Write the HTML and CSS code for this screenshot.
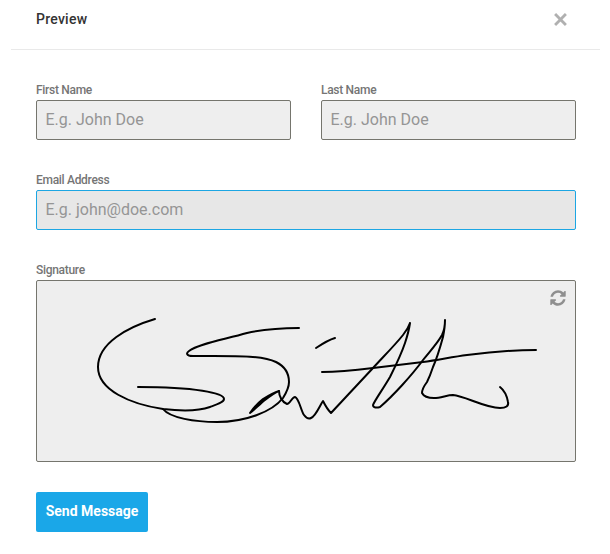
FILE: index.html
```html
<!DOCTYPE html>
<html lang="en">
<head>
<meta charset="utf-8">
<title>Preview</title>
<link rel="stylesheet" href="styles.css">
</head>
<body>
<div class="modal">
  <header class="modal-header">
    <h2 class="modal-title">Preview</h2>
    <svg class="close-icon" viewBox="0 0 12 12" aria-label="Close"><path d="M1 1 11 11M11 1 1 11"/></svg>
  </header>
  <form class="form">
    <div class="row">
      <div class="field">
        <label class="label" for="first">First Name</label>
        <input class="input" id="first" type="text" placeholder="E.g. John Doe">
      </div>
      <div class="field">
        <label class="label" for="last">Last Name</label>
        <input class="input" id="last" type="text" placeholder="E.g. John Doe">
      </div>
    </div>
    <div class="field">
      <label class="label" for="email">Email Address</label>
      <input class="input input-focus" id="email" type="text" placeholder="E.g. john@doe.com">
    </div>
    <div class="field">
      <span class="label">Signature</span>
      <div class="signature">
        <svg class="signature-ink" viewBox="36 280 540 182">
          <path d="M155 319C128 327 98 343 98 367C98 390 130 404 163 409C180 411 196 412 210 407C218 404 224 402 224 399C224 393 195 387 138 387"/>
          <path d="M163 409C170 418 195 422 217 422C245 422 272 412 283 398C288 390 289 386 289 382C289 372 284 366 276 362C262 355 235 356 193 356C186 356 186 353 189 351C198 344 222 340 247 333C265 329 280 328 299 328"/>
          <path class="thick" d="M250 413C254 407 258 403 263 399C268 396 273 393 279 391C274 393 270 396 265 400C260 404 254 410 250 413Z"/>
          <path d="M279 391C279 396 282 402 287 404C290 404 292 397 295 397C299 398 301 411 304 415C307 419 309 419 311 418C316 416 320 405 323 401C325 405 328 410 331 413L373 368C385 355 395 345 403 335C407 330 409 326 410 323C409 330 407 337 405 343C401 355 395 367 390 377C383 389 375 400 373 405C373 408 377 408 380 407C393 396 412 375 423 360C430 351 437 344 442 335C444 331 445 326 445 320C445 326 444 332 443 337C440 348 437 358 433 367C431 373 429 378 427 382C424 386 422 390 422 393C424 397 430 398 434 398C441 398 447 395 453 395C465 396 485 408 500 408C506 408 509 406 508 402C507 396 505 391 500 387"/>
          <path d="M322 372C340 372 357 370 373 368C390 366 406 364 423 362C438 360 452 357 467 355C490 352 512 350 536 350"/>
          <path d="M316 348C322 344 328 340 335 338"/>
        </svg>
        <svg class="refresh-icon" viewBox="0 0 1792 1792" aria-label="Reset"><path d="M1639 1056q0 5-1 7-64 268-268 434.5t-478 166.5q-146 0-282.5-55t-243.5-157l-129 129q-19 19-45 19t-45-19-19-45v-448q0-26 19-45t45-19h448q26 0 45 19t19 45-19 45l-137 137q71 66 161 102t187 36q134 0 250-65t186-179q11-17 53-117 8-23 30-23h192q13 0 22.5 9.5t9.5 22.5zm25-800v448q0 26-19 45t-45 19h-448q-26 0-45-19t-19-45 19-45l138-138q-148-137-349-137-134 0-250 65t-186 179q-11 17-53 117-8 23-30 23h-199q-13 0-22.5-9.5t-9.5-22.5v-7q65-268 270-434.5t480-166.5q146 0 284 55.5t245 156.5l130-129q19-19 45-19t45 19 19 45z"/></svg>
      </div>
    </div>
    <button class="button" type="button">Send Message</button>
  </form>
</div>
</body>
</html>
```
FILE: styles.css
```css
* {
  box-sizing: border-box;
}

html,
body {
  margin: 0;
  background: #fff;
}

body {
  font-family: Roboto, "Liberation Sans", sans-serif;
  overflow: hidden;
}

.modal {
  width: 589px;
  margin-left: 11px;
}

.modal-header {
  height: 50px;
  padding: 0 33px 0 25px;
  border-bottom: 1px solid #e9e9e9;
  display: flex;
  justify-content: space-between;
  align-items: flex-start;
}

.modal-title {
  margin: 0;
  padding-top: 10px;
  font-size: 14px;
  line-height: 18px;
  font-weight: 500;
  color: #333;
  letter-spacing: 0.25px;
}

.close-icon {
  width: 13px;
  height: 13px;
  margin-top: 13px;
  fill: none;
  stroke: #b0b0b0;
  stroke-width: 2.6;
}

.form {
  padding: 30px 24px 0 25px;
  display: flex;
  flex-direction: column;
  gap: 30px;
}

.row {
  display: flex;
  gap: 30px;
}

.row .field {
  flex: 1;
}

.field {
  display: flex;
  flex-direction: column;
}

.label {
  height: 20px;
  font-size: 12px;
  line-height: 20px;
  font-weight: 500;
  color: #757575;
  letter-spacing: -0.3px;
}

.input {
  display: block;
  width: 100%;
  height: 40px;
  padding: 0 8px 2px 8.5px;
  border: 1px solid #75756d;
  border-radius: 2px;
  background: #eee;
  font-family: inherit;
  font-size: 16px;
  color: #333;
  outline: none;
}

.input::placeholder {
  color: #959595;
  opacity: 1;
}

.input-focus {
  border-color: #1ca6e3;
  background: #e7e7e7;
}

.signature {
  position: relative;
  height: 182px;
  border: 1px solid #75756d;
  border-radius: 2px;
  background: #eee;
}

.signature-ink {
  display: block;
  width: 540px;
  height: 182px;
  margin: -1px;
  fill: none;
  stroke: #000;
  stroke-width: 2;
  stroke-linecap: round;
  stroke-linejoin: round;
}

.signature-ink .thick {
  fill: #000;
}

.refresh-icon {
  position: absolute;
  top: 8px;
  right: 8px;
  width: 18px;
  height: 18px;
  fill: #8f8f8f;
}

.button {
  align-self: flex-start;
  width: 112px;
  height: 40px;
  padding: 0 0 2px;
  border: 0;
  border-radius: 2px;
  background: #1aa7e8;
  color: #fff;
  font-family: inherit;
  font-size: 14px;
  font-weight: 700;
}
```
